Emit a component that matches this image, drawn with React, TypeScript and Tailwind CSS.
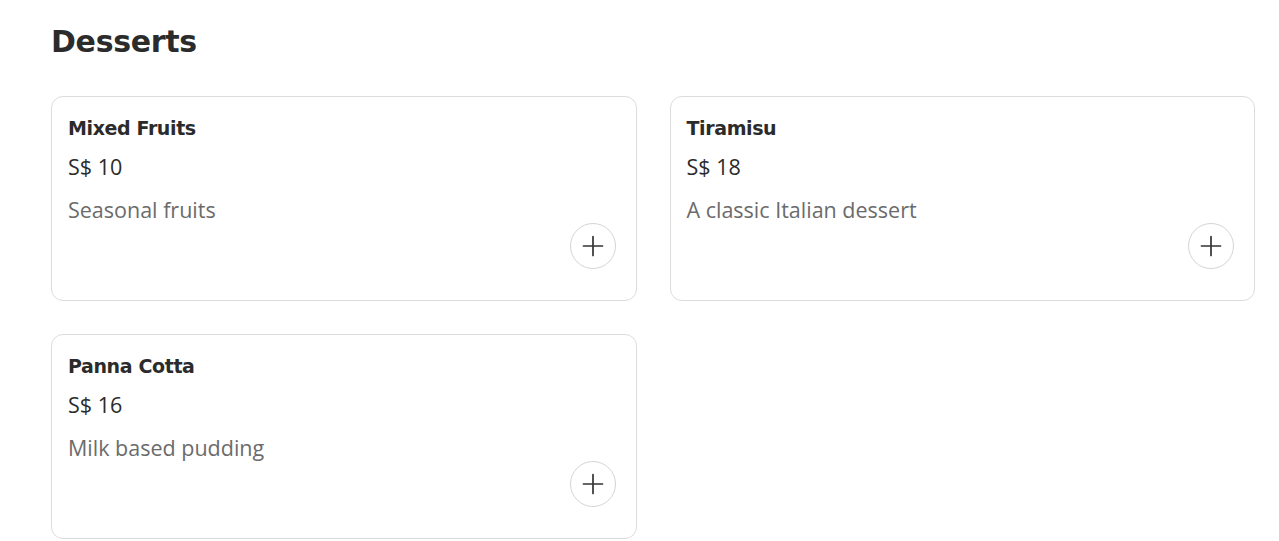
import React from "react";

type Dessert = {
  id: string;
  name: string;
  price: number;
  description: string;
};

const desserts: Dessert[] = [
  { id: "mixed-fruits", name: "Mixed Fruits", price: 10, description: "Seasonal fruits" },
  { id: "tiramisu", name: "Tiramisu", price: 18, description: "A classic Italian dessert" },
  { id: "panna-cotta", name: "Panna Cotta", price: 16, description: "Milk based pudding" },
];

const headingFont = { fontFamily: "'DejaVu Sans', Inter, sans-serif" };
const bodyFont = { fontFamily: "'Open Sans', 'Noto Sans', sans-serif" };

function PlusButton() {
  return (
    <button
      type="button"
      aria-label="Add"
      className="flex h-[46px] w-[46px] items-center justify-center rounded-full border border-[#d4d4d4] bg-white text-[#333]"
    >
      <svg width="22" height="22" viewBox="0 0 22 22" fill="none" stroke="currentColor" strokeWidth="1.7" strokeLinecap="round">
        <path d="M11 1.5v19M1.5 11h19" />
      </svg>
    </button>
  );
}

function DessertCard({ item }: { item: Dessert }) {
  return (
    <div className="flex h-[205px] flex-col rounded-xl border border-[#dcdcdc] bg-white px-4 pt-4">
      <h3 className="text-[19px] font-bold leading-[30px] tracking-[-0.02em] text-[#2b2b2b]" style={headingFont}>
        {item.name}
      </h3>
      <p className="mt-[10px] text-[21.5px] leading-[28px] text-[#2b2b2b]" style={bodyFont}>
        S$ {item.price}
      </p>
      <p className="mt-[15px] text-[21.5px] leading-[28px] text-[#6b6b6b]" style={bodyFont}>
        {item.description}
      </p>
      <div className="-mt-px flex justify-end pr-1">
        <PlusButton />
      </div>
    </div>
  );
}

export default function App() {
  return (
    <div className="min-h-screen bg-white pl-[51px] pr-[24px] pt-[22px]">
      <h2 className="text-[30px] font-bold leading-[40px] tracking-[-0.01em] text-[#2b2b2b]" style={headingFont}>
        Desserts
      </h2>
      <div className="mt-[34px] grid grid-cols-2 gap-x-[33px] gap-y-[33px]">
        {desserts.map((item) => (
          <DessertCard key={item.id} item={item} />
        ))}
      </div>
    </div>
  );
}
